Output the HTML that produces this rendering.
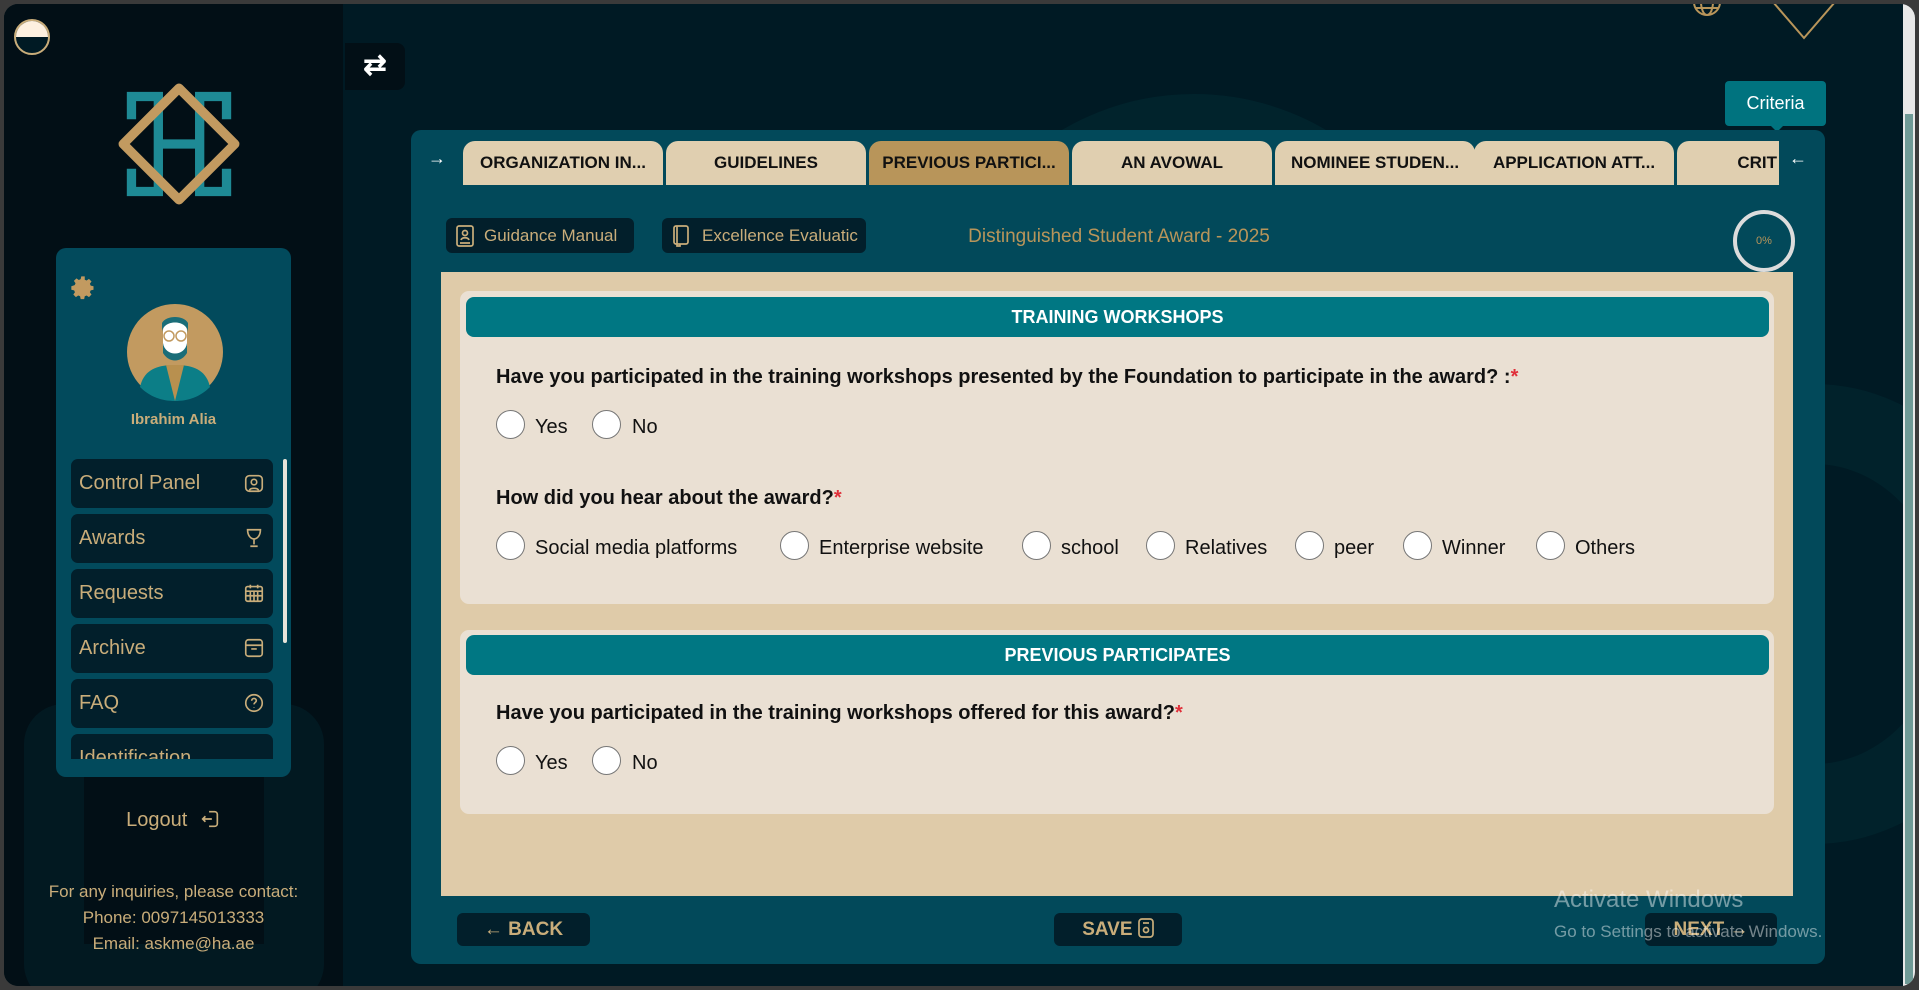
<!DOCTYPE html>
<html><head><meta charset="utf-8"><style>
*{box-sizing:border-box;margin:0;padding:0}
body{width:1919px;height:990px;background:#3a3a3a;font-family:"Liberation Sans",sans-serif;overflow:hidden;position:relative}
.a{position:absolute}
#win{left:4px;top:4px;width:1911px;height:982px;border-radius:14px;background:#001a24;overflow:hidden}
#side{left:0;top:0;width:339px;height:982px;background:#020f16;overflow:hidden}
.menu{left:15px;width:202px;height:49px;background:#021f2b;border-radius:7px;color:#c9ad7a;font-size:20px;padding:13px 0 0 8px}
.menu svg{position:absolute;right:8px;top:13px}
.tab{top:137px;height:44px;width:200px;background:#e0cfb0;border-radius:12px 12px 0 0;font-weight:bold;font-size:17px;color:#111;text-align:center;line-height:44px;white-space:nowrap;overflow:hidden}
.btn{background:#021f2b;border-radius:6px;color:#c9ad7a;font-size:17px}
.card{background:#eae0d3;border-radius:9px}
.hdr{background:#007783;border-radius:8px;color:#fff;font-weight:bold;font-size:18px;text-align:center}
.q{font-weight:bold;font-size:20px;color:#111}
.q b{color:#e0303a}
.r{width:29px;height:29px;border-radius:50%;background:#fff;border:1.5px solid #777}
.l{font-size:20px;color:#111}
</style></head><body>
<div id="win" class="a">
<!-- background decor -->
<div class="a" style="left:930px;top:90px;width:520px;height:520px;border-radius:50%;border:90px solid #022830;opacity:.7"></div>
<div class="a" style="left:1600px;top:380px;width:420px;height:460px;border-radius:50%;border:80px solid #022830;opacity:.6"></div>
<svg class="a" style="left:1685px;top:-14px" width="36" height="36" viewBox="0 0 36 36" fill="none" stroke="#b8955a" stroke-width="2"><circle cx="18" cy="12" r="13"/><ellipse cx="18" cy="12" rx="6" ry="13"/><path d="M5 12h26M7 18h22"/></svg>
<svg class="a" style="left:1765px;top:-10px" width="70" height="48" viewBox="0 0 70 48" fill="none" stroke="#b8955a" stroke-width="2"><path d="M4 8L35 44L66 8"/><path d="M25 8h20"/></svg>

<div id="side" class="a">
 <div class="a" style="left:20px;top:700px;width:300px;height:300px;border-radius:40px;border:60px solid #04202a;opacity:.6"></div>
 <div class="a" style="left:10px;top:15px;width:36px;height:36px;border-radius:50%;border:2px solid #c9ad7a;overflow:hidden;background:#001a24"><div style="height:16px;background:#fdf0e0"></div></div>
 <svg class="a" style="left:113px;top:78px" width="124" height="124" viewBox="0 0 120 120">
  <g fill="none" stroke="#1e8a95" stroke-width="9"><path d="M40 40V14H14v22M80 40V14h26v22M40 80v26H14V84M80 80v26h26V84M40 36v48M80 36v48M40 60h40"/></g>
  <g fill="none" stroke="#c29a60" stroke-width="9"><path d="M60 6L114 60L60 114L6 60Z" stroke-linejoin="round"/></g>
 </svg>
 <div class="a" style="left:52px;top:244px;width:235px;height:529px;background:#024a5c;border-radius:10px">
  <svg class="a" style="left:13px;top:26px" width="28" height="28" viewBox="0 0 24 24"><path fill="#c29a60" d="M12 8a4 4 0 100 8 4 4 0 000-8zm9 5.5v-3l-2.4-.5-.7-1.6 1.4-2-2.2-2.2-2 1.4-1.6-.7L13.5 2h-3l-.5 2.4-1.6.7-2-1.4-2.2 2.2 1.4 2-.7 1.6L2 10.5v3l2.4.5.7 1.6-1.4 2 2.2 2.2 2-1.4 1.6.7.5 2.4h3l.5-2.4 1.6-.7 2 1.4 2.2-2.2-1.4-2 .7-1.6z"/></svg>
  <svg class="a" style="left:70px;top:55px" width="98" height="98" viewBox="0 0 98 98"><circle cx="49" cy="49" r="48" fill="#c29a60"/><path d="M14 84c4-18 18-22 35-22s31 4 35 22c-10 10-22 14-35 14S24 94 14 84z" fill="#0c7e87"/><path d="M40 62l9 36 9-36z" fill="#b8904f"/><rect x="37" y="18" width="24" height="34" rx="10" fill="#fff"/><path d="M36 30c0-14 26-14 26 0v-10c-4-8-22-8-26 0z" fill="#1a6d78"/><path d="M37 40c2 14 22 14 24 0v10c-6 10-18 10-24 0z" fill="#1a6d78"/><circle cx="43" cy="33" r="5" fill="none" stroke="#c29a60" stroke-width="1.5"/><circle cx="55" cy="33" r="5" fill="none" stroke="#c29a60" stroke-width="1.5"/></svg>
  <div class="a" style="left:0;width:235px;top:163px;text-align:center;color:#c9ad7a;font-size:15px;font-weight:bold">Ibrahim Alia</div>
  <div class="a" style="left:0;top:211px;width:235px;height:300px;overflow:hidden">
   <div class="a menu" style="top:0">Control Panel<svg width="22" height="22" viewBox="0 0 24 24" fill="none" stroke="#c9ad7a" stroke-width="1.8"><rect x="3" y="4" width="18" height="17" rx="4"/><circle cx="12" cy="11" r="3"/><path d="M7 20c1-3 9-3 10 0"/></svg></div>
   <div class="a menu" style="top:55px">Awards<svg width="22" height="22" viewBox="0 0 24 24" fill="none" stroke="#c9ad7a" stroke-width="1.8"><path d="M5 3h14c0 7-4 10-7 10S5 10 5 3zM12 13v6M8 21h8"/></svg></div>
   <div class="a menu" style="top:110px">Requests<svg width="22" height="22" viewBox="0 0 24 24" fill="none" stroke="#c9ad7a" stroke-width="1.8"><rect x="3" y="5" width="18" height="16" rx="2"/><path d="M3 10h18M8 3v4M16 3v4M8 10v11M12 10v11M16 10v11M3 15h18"/></svg></div>
   <div class="a menu" style="top:165px">Archive<svg width="22" height="22" viewBox="0 0 24 24" fill="none" stroke="#c9ad7a" stroke-width="1.8"><rect x="3" y="3" width="18" height="18" rx="3"/><path d="M3 9h18M9 13h6"/></svg></div>
   <div class="a menu" style="top:220px">FAQ<svg width="22" height="22" viewBox="0 0 24 24" fill="none" stroke="#c9ad7a" stroke-width="1.8"><circle cx="12" cy="12" r="9"/><path d="M9.5 9.5a2.5 2.5 0 115 0c0 2-2.5 2-2.5 4M12 16.5v.5"/></svg></div>
   <div class="a menu" style="top:275px">Identification</div>
  </div>
  <div class="a" style="left:227px;top:211px;width:4px;height:184px;background:#e8e4da;border-radius:2px"></div>
 </div>
 <div class="a" style="left:0;width:339px;top:804px;text-align:center;color:#c9ad7a;font-size:20px">Logout <svg width="22" height="22" viewBox="0 0 24 24" fill="none" stroke="#c9ad7a" stroke-width="1.8" style="vertical-align:-4px;margin-left:6px"><path d="M11 4h6a3 3 0 013 3v10a3 3 0 01-3 3h-6M14 12H4M7 9l-3 3 3 3"/></svg></div>
 <div class="a" style="left:0;width:339px;top:875px;text-align:center;color:#c9ad7a;font-size:17px;line-height:26px">For any inquiries, please contact:<br>Phone: 0097145013333<br>Email: askme@ha.ae</div>
</div>

<div class="a" style="left:341px;top:39px;width:60px;height:47px;background:#020f16;border-radius:0 8px 8px 0;color:#fff;font-size:28px;text-align:center;line-height:44px;font-weight:bold">⇄</div>

<div class="a" style="left:1721px;top:77px;width:101px;height:45px;background:#00737f;border-radius:4px;color:#fff;font-size:18px;text-align:center;line-height:45px">Criteria</div>
<div class="a" style="left:1766px;top:121px;width:0;height:0;border-left:7px solid transparent;border-right:7px solid transparent;border-top:7px solid #00737f"></div>

<div class="a" style="left:407px;top:126px;width:1414px;height:834px;background:#02495a;border-radius:10px"></div>
<div class="a" style="left:424px;top:144px;color:#fff;font-size:18px;font-weight:bold">→</div>
<div class="a tab" style="left:459px">ORGANIZATION IN...</div>
<div class="a tab" style="left:662px">GUIDELINES</div>
<div class="a tab" style="left:865px;background:#b8955a">PREVIOUS PARTICI...</div>
<div class="a tab" style="left:1068px">AN AVOWAL</div>
<div class="a tab" style="left:1271px">NOMINEE STUDEN...</div>
<div class="a tab" style="left:1470px">APPLICATION ATT...</div>
<div class="a tab" style="left:1673px;width:102px;text-align:right;padding-right:2px;border-radius:12px 0 0 0">CRIT</div>
<div class="a" style="left:1785px;top:144px;color:#fff;font-size:18px;font-weight:bold">←</div>

<div class="a btn" style="left:442px;top:214px;width:188px;height:35px;padding:8px 0 0 38px">Guidance Manual</div>
<svg class="a" style="left:452px;top:221px" width="18" height="22" viewBox="0 0 18 22" fill="none" stroke="#c9ad7a" stroke-width="1.7"><rect x="1" y="1" width="16" height="20" rx="2"/><circle cx="9" cy="8" r="2.5"/><path d="M5 15c1-3 7-3 8 0M4 18h10"/></svg>
<div class="a btn" style="left:658px;top:214px;width:204px;height:35px;padding:8px 0 0 40px;overflow:hidden;white-space:nowrap">Excellence Evaluatic</div>
<svg class="a" style="left:668px;top:221px" width="18" height="22" viewBox="0 0 18 22" fill="none" stroke="#c9ad7a" stroke-width="1.7"><rect x="2" y="1" width="14" height="18" rx="2"/><path d="M5 1v18M5 19v2h3v-2"/></svg>
<div class="a" style="left:900px;width:430px;top:222px;text-align:center;color:#b8955a;font-size:19px">Distinguished Student Award - 2025</div>
<div class="a" style="left:1729px;top:206px;width:62px;height:62px;border-radius:50%;border:4px solid #dcdcdc;color:#b8955a;font-size:11px;text-align:center;line-height:54px">0%</div>

<div class="a" style="left:437px;top:268px;width:1352px;height:624px;background:#dfcba9"></div>

<div class="a card" style="left:456px;top:287px;width:1314px;height:313px"></div>
<div class="a hdr" style="left:462px;top:293px;width:1303px;height:40px;line-height:40px">TRAINING WORKSHOPS</div>
<div class="a q" style="left:492px;top:362px">Have you participated in the training workshops presented by the Foundation to participate in the award? :<b>*</b></div>
<div class="a r" style="left:492px;top:406px"></div><div class="a l" style="left:531px;top:412px">Yes</div>
<div class="a r" style="left:588px;top:406px"></div><div class="a l" style="left:628px;top:412px">No</div>
<div class="a q" style="left:492px;top:483px">How did you hear about the award?<b>*</b></div>
<div class="a r" style="left:492px;top:527px"></div><div class="a l" style="left:531px;top:533px">Social media platforms</div>
<div class="a r" style="left:776px;top:527px"></div><div class="a l" style="left:815px;top:533px">Enterprise website</div>
<div class="a r" style="left:1018px;top:527px"></div><div class="a l" style="left:1057px;top:533px">school</div>
<div class="a r" style="left:1142px;top:527px"></div><div class="a l" style="left:1181px;top:533px">Relatives</div>
<div class="a r" style="left:1291px;top:527px"></div><div class="a l" style="left:1330px;top:533px">peer</div>
<div class="a r" style="left:1399px;top:527px"></div><div class="a l" style="left:1438px;top:533px">Winner</div>
<div class="a r" style="left:1532px;top:527px"></div><div class="a l" style="left:1571px;top:533px">Others</div>

<div class="a card" style="left:456px;top:626px;width:1314px;height:184px"></div>
<div class="a hdr" style="left:462px;top:631px;width:1303px;height:40px;line-height:40px">PREVIOUS PARTICIPATES</div>
<div class="a q" style="left:492px;top:698px">Have you participated in the training workshops offered for this award?<b>*</b></div>
<div class="a r" style="left:492px;top:742px"></div><div class="a l" style="left:531px;top:748px">Yes</div>
<div class="a r" style="left:588px;top:742px"></div><div class="a l" style="left:628px;top:748px">No</div>

<div class="a btn" style="left:453px;top:909px;width:133px;height:33px;text-align:center;line-height:33px;font-size:19px;font-weight:bold">← BACK</div>
<div class="a btn" style="left:1050px;top:909px;width:128px;height:33px;text-align:center;line-height:33px;font-size:19px;font-weight:bold">SAVE <svg width="16" height="20" viewBox="0 0 16 20" fill="none" stroke="#c9ad7a" stroke-width="1.7" style="vertical-align:-3px"><rect x="1" y="1" width="14" height="18" rx="3"/><circle cx="8" cy="12" r="2.5"/><path d="M5 5h6"/></svg></div>
<div class="a btn" style="left:1641px;top:909px;width:132px;height:33px;text-align:center;line-height:33px;font-size:19px;font-weight:bold">NEXT →</div>
<div class="a" style="left:1550px;top:882px;color:rgba(255,255,255,.45);font-size:24px">Activate Windows</div>
<div class="a" style="left:1550px;top:918px;color:rgba(255,255,255,.45);font-size:17px">Go to Settings to activate Windows.</div>

<div class="a" style="left:1899px;top:0;width:12px;height:982px;background:#e8e8e8"></div>
<div class="a" style="left:1901px;top:110px;width:8px;height:870px;background:#6f9a96"></div>
</div>
</body></html>
